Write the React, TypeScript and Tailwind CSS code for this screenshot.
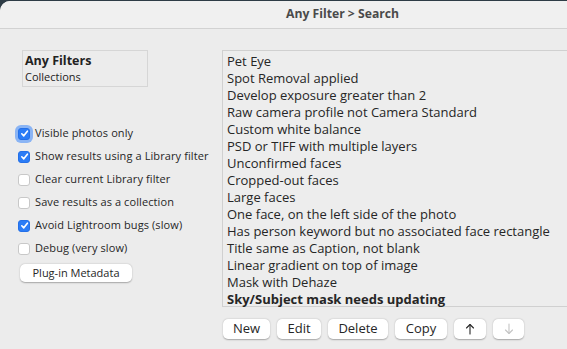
import React from "react";

const items = [
  "Pet Eye",
  "Spot Removal applied",
  "Develop exposure greater than 2",
  "Raw camera profile not Camera Standard",
  "Custom white balance",
  "PSD or TIFF with multiple layers",
  "Unconfirmed faces",
  "Cropped-out faces",
  "Large faces",
  "One face, on the left side of the photo",
  "Has person keyword but no associated face rectangle",
  "Title same as Caption, not blank",
  "Linear gradient on top of image",
  "Mask with Dehaze",
];

const checks: { label: string; checked: boolean; focus?: boolean }[] = [
  { label: "Visible photos only", checked: true, focus: true },
  { label: "Show results using a Library filter", checked: true },
  { label: "Clear current Library filter", checked: false },
  { label: "Save results as a collection", checked: false },
  { label: "Avoid Lightroom bugs (slow)", checked: true },
  { label: "Debug (very slow)", checked: false },
];

function Box({ checked, focus }: { checked: boolean; focus?: boolean }) {
  return (
    <div
      className={
        "w-[12px] h-[12px] rounded-[3px] flex items-center justify-center shrink-0 " +
        (checked
          ? "bg-[#2b7cf6] border border-[#2470e8]"
          : "bg-white border border-[#c8c8c8]") +
        (focus ? " ring-[3px] ring-[#8ab4f4]" : "")
      }
    >
      {checked && (
        <svg width="9" height="9" viewBox="0 0 10 10">
          <path d="M2 5.3 L4.2 7.6 L8.2 2.4" fill="none" stroke="white" strokeWidth="1.8" strokeLinecap="round" strokeLinejoin="round" />
        </svg>
      )}
    </div>
  );
}

function Btn({ children, w, disabled }: { children: React.ReactNode; w: string; disabled?: boolean }) {
  return (
    <div
      className={
        "h-[20px] rounded-[5px] bg-white flex items-center justify-center text-[13px] shadow-[0_0.5px_1.5px_rgba(0,0,0,0.3)] " +
        w +
        (disabled ? " text-[#c4c4c4] bg-[#f6f6f6]" : " text-[#262626]")
      }
    >
      {children}
    </div>
  );
}

function Arrow({ up, color }: { up: boolean; color: string }) {
  return (
    <svg width="10" height="12" viewBox="0 0 10 12">
      <g fill="none" stroke={color} strokeWidth="1.1" strokeLinecap="round" strokeLinejoin="round">
        {up ? (
          <>
            <path d="M5 1.5 V11" />
            <path d="M1.5 5 L5 1.5 L8.5 5" />
          </>
        ) : (
          <>
            <path d="M5 1 V10.5" />
            <path d="M1.5 7 L5 10.5 L8.5 7" />
          </>
        )}
      </g>
    </svg>
  );
}

export default function App() {
  return (
    <div className="w-[567px] h-[349px] bg-[#2e3c46] overflow-hidden" style={{ fontFamily: '"Open Sans", "Liberation Sans", Arial, sans-serif' }}>
      <div className="mt-px h-[348px] rounded-tl-[10px] bg-[#ececec] flex flex-col overflow-hidden">
        <div className="h-[28px] bg-[#f0f0f0] border-b border-[#d2d2d2] flex items-center pl-[286px] text-[12.2px] font-bold text-[#4a4a4a]">
          Any Filter &gt; Search
        </div>
        <div className="flex flex-1">
          <div className="w-[222px] shrink-0 flex flex-col">
            <div className="ml-[22px] mt-[21px] w-[126px] h-[37px] border border-[#d6d6d6] px-[2px] pt-[1px] text-[#222]">
              <div className="text-[12.5px] font-bold leading-[17px]">Any Filters</div>
              <div className="text-[11px] leading-[15px]">Collections</div>
            </div>
            <div className="mt-[40px] ml-[18px] flex flex-col gap-[10px]">
              {checks.map((c) => (
                <div key={c.label} className="flex items-center gap-[5px] h-[13px] text-[11px] tracking-[0.1px] text-[#262626]">
                  <Box checked={c.checked} focus={c.focus} />
                  <span>{c.label}</span>
                </div>
              ))}
            </div>
            <div className="mt-[9px] ml-[20px] w-[112px] h-[18px] rounded-[5px] bg-white shadow-[0_0.5px_1.5px_rgba(0,0,0,0.3)] flex items-center justify-center text-[11px] text-[#262626]">
              Plug-in Metadata
            </div>
          </div>
          <div className="flex-1 flex flex-col">
            <div className="mt-[21px] h-[257px] border border-r-0 border-[#d0d0d0] bg-[#ededed] pl-[4px] pt-[2px] text-[13px] text-[#262626] leading-[17px]">
              {items.map((t) => (
                <div key={t}>{t}</div>
              ))}
              <div className="font-bold">Sky/Subject mask needs updating</div>
            </div>
            <div className="mt-[12px] flex gap-[7px] ml-[1px]">
              <Btn w="w-[47px]">New</Btn>
              <Btn w="w-[44px]">Edit</Btn>
              <Btn w="w-[60px]">Delete</Btn>
              <Btn w="w-[52px]">Copy</Btn>
              <Btn w="w-[32px]"><Arrow up color="#262626" /></Btn>
              <Btn w="w-[31px]" disabled><Arrow up={false} color="#c4c4c4" /></Btn>
            </div>
          </div>
        </div>
      </div>
    </div>
  );
}
